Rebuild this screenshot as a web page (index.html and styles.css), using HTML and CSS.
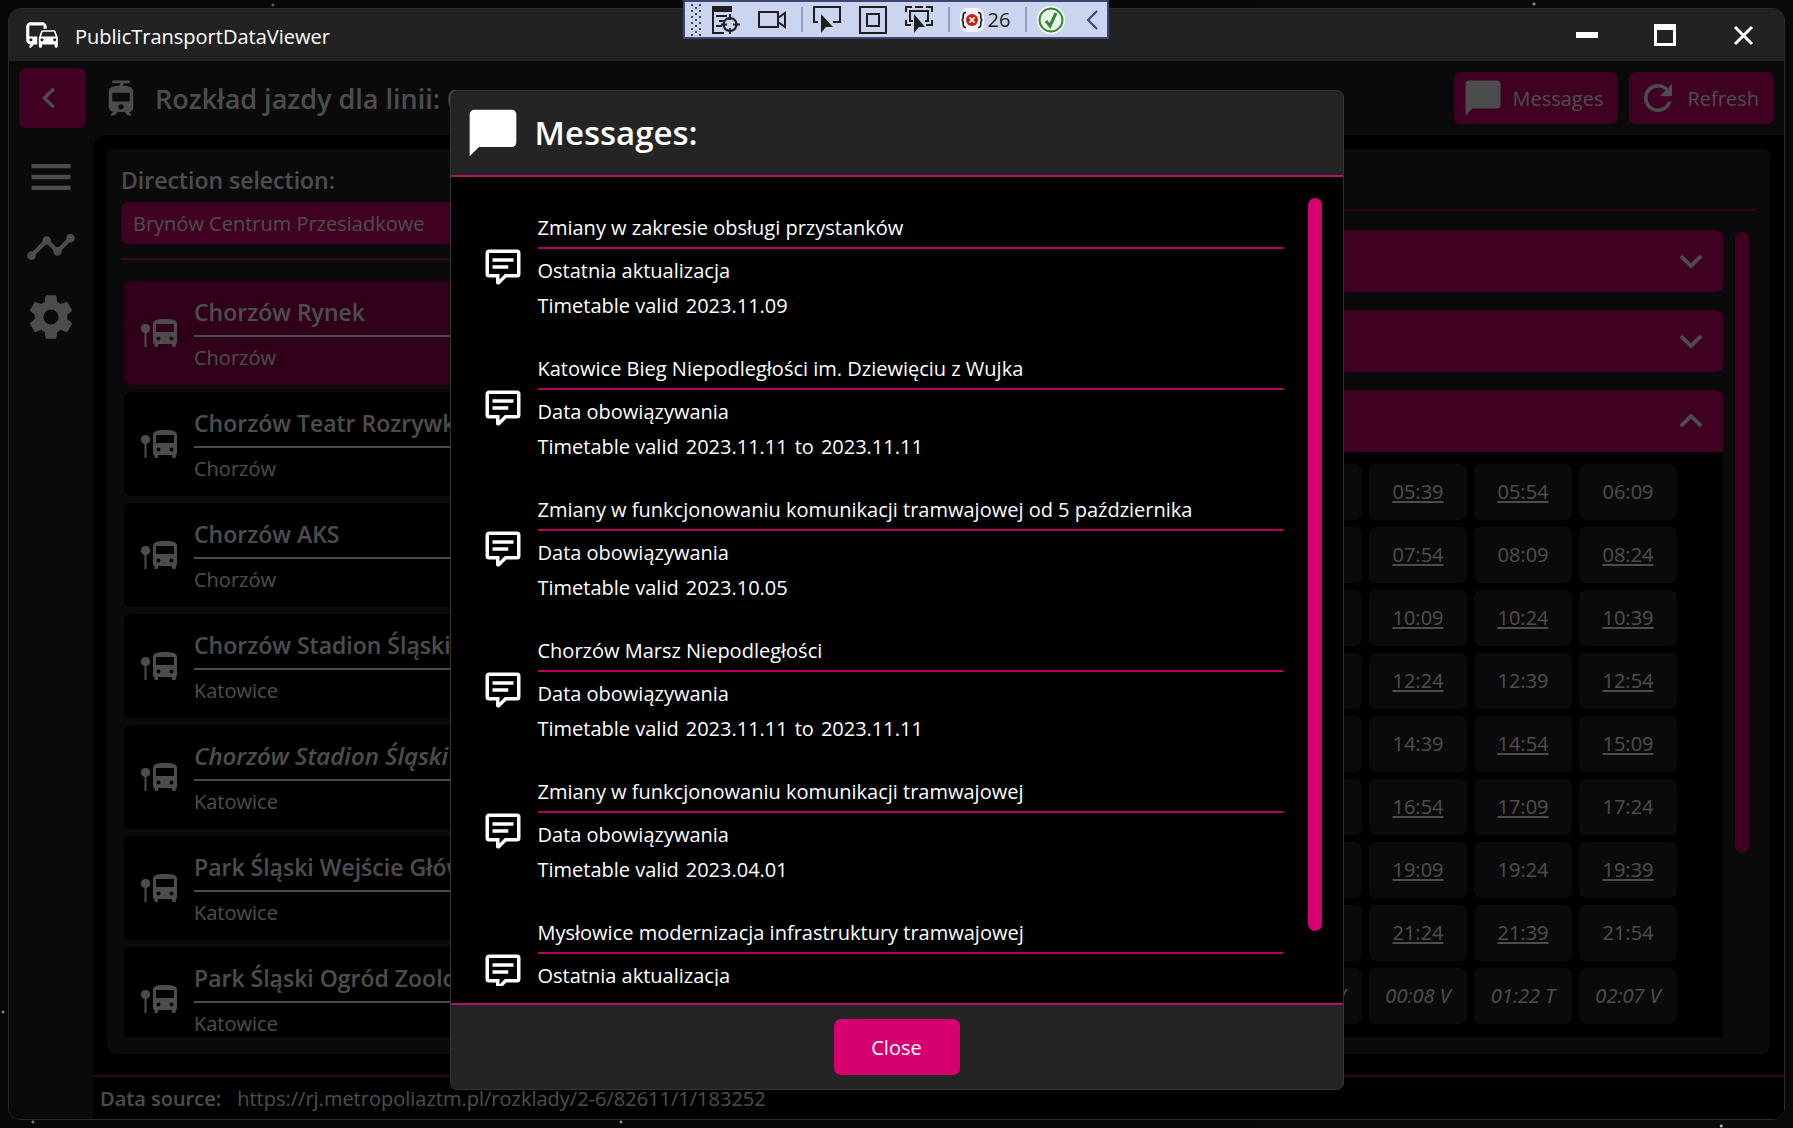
FILE: index.html
```html
<!DOCTYPE html>
<html lang="pl">
<head>
<meta charset="utf-8">
<title>PublicTransportDataViewer</title>
<link rel="stylesheet" href="styles.css">
</head>
<body>
<svg class="defs" aria-hidden="true">
  <symbol id="i-message" viewBox="0 0 24 24"><path d="M20,2H4A2,2 0 0,0 2,4V22L6,18H20A2,2 0 0,0 22,16V4C22,2.89 21.1,2 20,2Z"/></symbol>
  <symbol id="i-comment" viewBox="0 0 24 24"><path d="M9,22A1,1 0 0,1 8,21V18H4A2,2 0 0,1 2,16V4C2,2.89 2.9,2 4,2H20A2,2 0 0,1 22,4V16A2,2 0 0,1 20,18H13.9L10.2,21.71C10,21.9 9.75,22 9.5,22V22H9M10,16V19.08L13.08,16H20V4H4V16H10M6,7H18V9H6V7M6,11H15V13H6V11Z"/></symbol>
  <symbol id="i-down" viewBox="0 0 24 24"><path d="M7.41,8.58L12,13.17L16.59,8.58L18,10L12,16L6,10L7.41,8.58Z"/></symbol>
  <symbol id="i-up" viewBox="0 0 24 24"><path d="M7.41,15.41L12,10.83L16.59,15.41L18,14L12,8L6,14L7.41,15.41Z"/></symbol>
  <symbol id="i-stop" viewBox="0 0 36 28"><path fill-rule="evenodd" d="M4.500 5a4.500 4.500 0 0 1 1 8.900V28h-2V13.900A4.500 4.500 0 0 1 4.500 5zM12 5c0-4 4-5 12-5s12 1 12 5v18c0 1-.5 1.800-1.200 2.300V27a1 1 0 0 1-1 1H32a1 1 0 0 1-1-1v-2H17v2a1 1 0 0 1-1 1h-1.500a1 1 0 0 1-1-1v-1.700C12.500 24.800 12 24 12 23zM15 5v8h18V5zM17.500 17.500a2 2 0 1 0 0 4 2 2 0 0 0 0-4zM30.500 17.500a2 2 0 1 0 0 4 2 2 0 0 0 0-4z"/></symbol>
</svg>

<div class="window">
  <header class="titlebar">
    <svg class="app-icon" viewBox="0 0 24 24" aria-hidden="true"><path d="M12 4H5C3.34 4 2 5.34 2 7v8c0 1.660 1.340 3 3 3l-1 1v1h1l2-2.030L9 18v-5H4V5.980L13 6v2h2V7c0-1.660-1.340-3-3-3zM5 14c.55 0 1 .45 1 1s-.45 1-1 1-1-.45-1-1 .45-1 1-1zm15.570-4.340c-.14-.4-.52-.66-.97-.66h-7.190c-.46 0-.83.26-.98.66L10 13.770l.01 5.510c0 .38.31.72.69.72h.62c.38 0 .68-.38.68-.76V18h8v1.240c0 .38.31.76.69.76h.61c.38 0 .69-.34.69-.72l.01-1.370v-4.140l-1.430-4.110zm-8.160.34h7.190l1.030 3h-9.250l1.030-3zM12 16c-.55 0-1-.45-1-1s.45-1 1-1 1 .45 1 1-.45 1-1 1zm8 0c-.55 0-1-.45-1-1s.45-1 1-1 1 .45 1 1-.45 1-1 1z"/></svg>
    <span class="app-name">PublicTransportDataViewer</span>
    <div class="window-controls">
      <button aria-label="Minimize"><svg viewBox="0 0 22 22"><path d="M0 8h22v6H0z"/></svg></button>
      <button aria-label="Maximize"><svg viewBox="0 0 22 22"><path fill-rule="evenodd" d="M0 0h22v22H0zM3 6v13h16V6z"/></svg></button>
      <button aria-label="Close window"><svg viewBox="0 0 22 22"><path d="M3 3l17 17M20 3L3 20" fill="none" stroke="#fff" stroke-width="3"/></svg></button>
    </div>
  </header>

  <div class="body">
    <div class="topbar">
      <button class="back" aria-label="Back"><svg class="i42" viewBox="0 0 24 24"><path d="M15.410,16.580L10.830,12L15.410,7.410L14,6L8,12L14,18L15.410,16.580Z"/></svg></button>
      <svg class="i42 tram" viewBox="0 0 24 24" aria-hidden="true"><path d="M19,16.940V8.500C19,5.710 16.390,5.100 13,5L13.750,3.500H17V2H7V3.500H11.750L11,5C7.860,5.110 5,5.730 5,8.500V16.940C5,18.390 6.190,19.600 7.590,19.910L6,21.500V22H8.230L10.230,20H14L16,22H18V21.500L16.500,20H16.420C18.110,20 19,18.630 19,16.940M12,18.500A1.500,1.500 0 0,1 10.500,17A1.500,1.500 0 0,1 12,15.500A1.500,1.500 0 0,1 13.500,17A1.500,1.500 0 0,1 12,18.500M17,14H7V9H17V14Z"/></svg>
      <h1>Rozkład jazdy dla linii: 0</h1>
      <button class="action"><svg class="i42"><use href="#i-message"/></svg><span>Messages</span></button>
      <button class="action"><svg class="i42" viewBox="0 0 24 24"><path d="M17.650,6.350C16.200,4.900 14.210,4 12,4A8,8 0 0,0 4,12A8,8 0 0,0 12,20C15.730,20 18.840,17.450 19.730,14H17.650C16.830,16.330 14.610,18 12,18A6,6 0 0,1 6,12A6,6 0 0,1 12,6C13.660,6 15.140,6.690 16.220,7.780L13,11H20V4L17.650,6.350Z"/></svg><span>Refresh</span></button>
    </div>

    <div class="main">
      <nav class="sidebar">
        <button aria-label="Menu"><svg viewBox="0 0 24 24"><path d="M3,6H21V8H3V6M3,11H21V13H3V11M3,16H21V18H3V16Z"/></svg></button>
        <button aria-label="Lines"><svg viewBox="0 0 24 24"><path d="M23 8c0 1.100-.9 2-2 2-.18 0-.35-.02-.51-.07l-3.560 3.550c.05.16.07.34.07.52 0 1.100-.9 2-2 2s-2-.9-2-2c0-.18.02-.36.07-.52l-2.550-2.550c-.16.05-.34.07-.52.07s-.36-.02-.52-.07l-4.550 4.560c.05.16.07.33.07.51 0 1.100-.9 2-2 2s-2-.9-2-2 .9-2 2-2c.18 0 .35.02.51.07l4.560-4.550C8.020 9.360 8 9.180 8 9c0-1.100.9-2 2-2s2 .9 2 2c0 .18-.02.36-.07.52l2.550 2.550c.16-.05.34-.07.52-.07s.36.02.52.07l3.550-3.560C19.020 8.350 19 8.180 19 8c0-1.100.9-2 2-2s2 .9 2 2z"/></svg></button>
        <button aria-label="Settings"><svg viewBox="0 0 24 24"><path d="M12,15.500A3.500,3.500 0 0,1 8.500,12A3.500,3.500 0 0,1 12,8.500A3.500,3.500 0 0,1 15.500,12A3.500,3.500 0 0,1 12,15.500M19.430,12.970C19.470,12.650 19.500,12.330 19.500,12C19.500,11.670 19.470,11.340 19.430,11L21.540,9.370C21.730,9.220 21.780,8.950 21.660,8.730L19.660,5.270C19.540,5.050 19.270,4.960 19.050,5.050L16.560,6.050C16.040,5.660 15.500,5.320 14.870,5.070L14.500,2.420C14.460,2.180 14.250,2 14,2H10C9.750,2 9.540,2.180 9.500,2.420L9.130,5.070C8.500,5.320 7.960,5.660 7.440,6.050L4.950,5.050C4.730,4.960 4.460,5.050 4.340,5.270L2.340,8.730C2.210,8.950 2.270,9.220 2.460,9.370L4.570,11C4.530,11.340 4.500,11.670 4.500,12C4.500,12.330 4.530,12.650 4.570,12.970L2.460,14.630C2.270,14.780 2.210,15.050 2.340,15.270L4.340,18.730C4.460,18.950 4.730,19.030 4.950,18.950L7.440,17.940C7.960,18.340 8.500,18.680 9.130,18.930L9.500,21.580C9.540,21.820 9.750,22 10,22H14C14.250,22 14.460,21.820 14.500,21.580L14.870,18.930C15.500,18.670 16.040,18.340 16.560,17.940L19.050,18.950C19.270,19.030 19.540,18.950 19.660,18.730L21.660,15.270C21.780,15.050 21.730,14.780 21.540,14.630L19.430,12.970Z"/></svg></button>
      </nav>

      <div class="content">
        <div class="panels">
          <section class="panel directions">
            <label for="direction">Direction selection:</label>
            <select id="direction"><option>Brynów Centrum Przesiadkowe</option></select>
            <hr>
            <ul class="stops">
              <li class="selected"><svg><use href="#i-stop"/></svg><div><h2>Chorzów Rynek</h2><p>Chorzów</p></div></li>
              <li><svg><use href="#i-stop"/></svg><div><h2>Chorzów Teatr Rozrywki</h2><p>Chorzów</p></div></li>
              <li><svg><use href="#i-stop"/></svg><div><h2>Chorzów AKS</h2><p>Chorzów</p></div></li>
              <li><svg><use href="#i-stop"/></svg><div><h2>Chorzów Stadion Śląski</h2><p>Katowice</p></div></li>
              <li><svg><use href="#i-stop"/></svg><div><h2 class="on-request">Chorzów Stadion Śląski</h2><p>Katowice</p></div></li>
              <li><svg><use href="#i-stop"/></svg><div><h2>Park Śląski Wejście Główne</h2><p>Katowice</p></div></li>
              <li><svg><use href="#i-stop"/></svg><div><h2>Park Śląski Ogród Zoologiczny</h2><p>Katowice</p></div></li>
            </ul>
          </section>

          <section class="panel timetable">
            <div class="timetable-head"></div>
            <div class="scroll">
              <div class="days">
                <button class="day" aria-label="Expand"><svg><use href="#i-down"/></svg></button>
                <button class="day" aria-label="Expand"><svg><use href="#i-down"/></svg></button>
                <div class="day-open">
                  <button class="day" aria-label="Collapse"><svg><use href="#i-up"/></svg></button>
                  <div class="times">
                    <span>05:24</span><u>05:39</u><u>05:54</u><span>06:09</span>
                    <span>07:39</span><u>07:54</u><span>08:09</span><u>08:24</u>
                    <span>09:54</span><u>10:09</u><u>10:24</u><u>10:39</u>
                    <span>12:09</span><u>12:24</u><span>12:39</span><u>12:54</u>
                    <span>14:24</span><span>14:39</span><u>14:54</u><u>15:09</u>
                    <span>16:39</span><u>16:54</u><u>17:09</u><span>17:24</span>
                    <span>18:54</span><u>19:09</u><span>19:24</span><u>19:39</u>
                    <span>21:09</span><u>21:24</u><u>21:39</u><span>21:54</span>
                    <i>23:38 V</i><i>00:08 V</i><i>01:22 T</i><i>02:07 V</i>
                  </div>
                </div>
              </div>
              <div class="thumb"></div>
            </div>
          </section>
        </div>
        <footer class="source"><b>Data source:</b><span>https://rj.metropoliaztm.pl/rozklady/2-6/82611/1/183252</span></footer>
      </div>
    </div>

    <div class="overlay">
      <div class="dialog" role="dialog" aria-labelledby="dialog-title">
        <header><svg><use href="#i-message"/></svg><h2 id="dialog-title">Messages:</h2></header>
        <div class="dialog-body">
          <ul class="messages">
            <li><svg class="i42"><use href="#i-comment"/></svg><div><h3>Zmiany w zakresie obsługi przystanków</h3><p>Ostatnia aktualizacja</p><p class="valid"><span>Timetable valid</span><span>2023.11.09</span></p></div></li>
            <li><svg class="i42"><use href="#i-comment"/></svg><div><h3>Katowice Bieg Niepodległości im. Dziewięciu z Wujka</h3><p>Data obowiązywania</p><p class="valid"><span>Timetable valid</span><span>2023.11.11</span><span>to</span><span>2023.11.11</span></p></div></li>
            <li><svg class="i42"><use href="#i-comment"/></svg><div><h3>Zmiany w funkcjonowaniu komunikacji tramwajowej od 5 października</h3><p>Data obowiązywania</p><p class="valid"><span>Timetable valid</span><span>2023.10.05</span></p></div></li>
            <li><svg class="i42"><use href="#i-comment"/></svg><div><h3>Chorzów Marsz Niepodległości</h3><p>Data obowiązywania</p><p class="valid"><span>Timetable valid</span><span>2023.11.11</span><span>to</span><span>2023.11.11</span></p></div></li>
            <li><svg class="i42"><use href="#i-comment"/></svg><div><h3>Zmiany w funkcjonowaniu komunikacji tramwajowej</h3><p>Data obowiązywania</p><p class="valid"><span>Timetable valid</span><span>2023.04.01</span></p></div></li>
            <li><svg class="i42"><use href="#i-comment"/></svg><div><h3>Mysłowice modernizacja infrastruktury tramwajowej</h3><p>Ostatnia aktualizacja</p></div></li>
          </ul>
          <div class="thumb"></div>
        </div>
        <footer><button class="close">Close</button></footer>
      </div>
    </div>
  </div>
</div>

<div class="debugbar">
  <svg class="grip" viewBox="0 0 10 32"><path d="M1 0v32M9 0v32" stroke="#3c4670" stroke-width="2" stroke-dasharray="2 4"/><path d="M5 3v28" stroke="#3c4670" stroke-width="2" stroke-dasharray="2 4"/></svg>
  <button aria-label="Live visual tree"><svg viewBox="0 0 28 28"><path d="M0 0h19v5H0z" fill="#1e1e1e"/><path d="M1 3v24h11M4 10h11M7 15h5M4 20h6M18 12a6.500 6.500 0 1 0 .1 0zM18 8v6M18 22v6M9 18.500h6M21 18.500h7"/></svg></button>
  <button aria-label="Record"><svg viewBox="0 0 28 28"><path d="M1 6h19v15H1zM20 12l7-5v14l-7-5"/></svg></button>
  <span class="sep"></span>
  <button aria-label="Select element"><svg viewBox="0 0 28 28"><path d="M5 16H1V1h26v15h-7"/><path d="M8 8v19l5-6h7z" fill="#1e1e1e" stroke="none"/></svg></button>
  <button aria-label="Layout adorners"><svg viewBox="0 0 28 28"><path d="M1 1h26v26H1zM8 8h12v12H8z"/></svg></button>
  <button aria-label="Track focused element"><svg viewBox="0 0 28 28"><path d="M1 6V1h6M21 1h6v5M1 14v5h5M27 14v5h-6M8 15H5V5h18v10h-3M10 1h8"/><path d="M9 8v19l5-6h6z" fill="#1e1e1e" stroke="none"/></svg></button>
  <span class="sep"></span>
  <button class="errors"><svg viewBox="0 0 28 28"><rect width="28" height="28" rx="8" fill="#fff" stroke="none" opacity=".7"/><path d="M7 5c-6 0-1 8-5 9 4 1-1 9 5 9M21 5c6 0 1 8 5 9-4 1 1 9-5 9"/><circle cx="14" cy="14" r="7" fill="#d11a0c" stroke="none"/><path d="M11 11l6 6M17 11l-6 6" stroke="#fff"/></svg>26</button>
  <span class="sep"></span>
  <button aria-label="Hot reload"><svg viewBox="0 0 28 28"><circle cx="14" cy="14" r="14" fill="#fff" stroke="none"/><circle cx="14" cy="14" r="11.500" stroke="#2f8a2f" fill="#eef3ee"/><path d="M9 15l4 5 6-13" stroke="#2f8a2f" stroke-width="3"/></svg></button>
  <button class="collapse" aria-label="Collapse toolbar"><svg viewBox="0 0 20 28"><path d="M14 5l-9 9 9 9" stroke="#3c4670"/></svg></button>
</div>
</body>
</html>
```
FILE: styles.css
```css
:root {
  --accent: #d6006f;
  --surface: #242424;
}

* {
  box-sizing: border-box;
}

body {
  margin: 0;
  padding: 8px;
  height: 100vh;
  overflow: hidden;
  color: #fff;
  font: 20px/28px "Open Sans", "Noto Sans", sans-serif;
  background:
    radial-gradient(circle at 99% 10%, #888 0 1px, transparent 2px),
    radial-gradient(circle at 3px 1012px, #777 0 1px, transparent 2px),
    radial-gradient(circle at 33px 1122px, #777 0 1px, transparent 2px),
    radial-gradient(circle at 621px 1122px, #888 0 1px, transparent 2px),
    radial-gradient(circle at 96% 1126px, #aaa 0 1px, transparent 2px),
    radial-gradient(circle at 1534px 4px, #888 0 1px, transparent 2px),
    radial-gradient(circle at 273px 5px, #555 0 1px, transparent 2px),
    linear-gradient(90deg, #060708, #0b0908);
}

h1, h2, h3, p, ul {
  margin: 0;
  padding: 0;
  list-style: none;
}

button, select {
  border: 0;
  padding: 0;
  color: inherit;
  font: inherit;
  background: none;
}

svg {
  display: block;
  flex: none;
  fill: #fff;
}

.defs {
  position: absolute;
  width: 0;
  height: 0;
}

.i42 {
  width: 42px;
  height: 42px;
}

.window {
  display: flex;
  flex-direction: column;
  height: 100%;
  border: 1px solid #2a2a2a;
  border-radius: 12px;
  overflow: hidden;
  background: #000;
}

.titlebar {
  display: flex;
  align-items: center;
  height: 52px;
  padding: 0 20px 0 14px;
  flex: none;
  background: #222;
}

.app-icon {
  width: 38px;
  height: 38px;
}

.app-name {
  margin-left: 14px;
  padding-top: 3px;
}

.window-controls {
  display: flex;
  margin-left: auto;
  gap: 36px;
}

.window-controls button {
  padding: 0 10px;
}

.window-controls svg {
  width: 22px;
  height: 22px;
}

.body {
  position: relative;
  display: flex;
  flex: 1;
  flex-direction: column;
  min-height: 0;
  background: var(--surface);
}

.topbar {
  display: flex;
  align-items: center;
  height: 74px;
  padding: 0 10px;
  flex: none;
}

.back {
  display: grid;
  place-items: center;
  width: 67px;
  height: 60px;
  padding-right: 7px;
  border-radius: 7px;
  background: var(--accent);
}

.tram {
  margin: 0 13px 0 14px;
}

h1 {
  flex: 1;
  padding-top: 2px;
  font-size: 27px;
  font-weight: 600;
}

.action {
  display: flex;
  align-items: center;
  gap: 8px;
  height: 52px;
  margin-left: 11px;
  padding: 0 15px 0 8px;
  border-radius: 7px;
  background: var(--accent);
}

.action span {
  padding-top: 2px;
}

.main {
  display: flex;
  flex: 1;
  min-height: 0;
}

.sidebar {
  display: flex;
  flex-direction: column;
  align-items: center;
  gap: 18px;
  width: 84px;
  padding-top: 16px;
}

.sidebar svg {
  width: 52px;
  height: 52px;
}

.content {
  display: flex;
  flex: 1;
  flex-direction: column;
  min-width: 0;
  border-top-left-radius: 14px;
  background: #000;
}

.panels {
  display: grid;
  flex: 1;
  grid-template-columns: 3fr 5fr;
  gap: 14px;
  min-height: 0;
  padding: 14px 14px 21px;
}

.panel {
  display: flex;
  flex-direction: column;
  min-width: 0;
  min-height: 0;
  border-radius: 8px;
  background: var(--surface);
}

.directions {
  padding: 13px 14px 17px;
}

.directions label {
  margin-bottom: 4px;
  font-size: 23px;
  font-weight: 600;
  line-height: 36px;
}

.directions select {
  height: 42px;
  padding: 2px 12px 0;
  border-radius: 7px;
  appearance: none;
  background: var(--accent);
}

.directions hr {
  width: 100%;
  margin: 14px 0 21px;
  border: 0;
  border-top: 2px solid var(--accent);
}

.stops {
  display: flex;
  flex: 1;
  flex-direction: column;
  gap: 7px;
  min-height: 0;
  padding-left: 3px;
  overflow: hidden;
}

.stops li {
  display: flex;
  flex: none;
  align-items: center;
  gap: 17px;
  height: 104px;
  padding: 0 14px 0 17px;
  border-radius: 7px;
  background: #000;
}

.stops .selected {
  background: #a00053;
}

.stops svg {
  width: 36px;
  height: 28px;
}

.stops div {
  flex: 1;
}

.stops h2 {
  padding-bottom: 2px;
  border-bottom: 2px solid #fff;
  font-size: 23px;
  font-weight: 600;
  line-height: 42px;
}

.stops .on-request {
  font-size: 24px;
  font-style: italic;
}

.stops p {
  padding-top: 4px;
  line-height: 34px;
}

.timetable {
  padding: 0 14px 17px;
}

.timetable-head {
  height: 62px;
  margin-bottom: 19px;
  flex: none;
  border-bottom: 2px solid #a8105c;
}

.scroll {
  display: flex;
  flex: 1;
  align-items: flex-start;
  gap: 12px;
  min-height: 0;
  padding-right: 7px;
}

.days {
  display: flex;
  flex: 1;
  flex-direction: column;
  gap: 18px;
  height: 100%;
  overflow: hidden;
}

.day {
  display: flex;
  flex: none;
  align-items: center;
  justify-content: flex-end;
  width: 100%;
  height: 62px;
  padding-right: 9px;
  border-radius: 7px;
  background: var(--accent);
}

.day svg {
  width: 46px;
  height: 46px;
}

.day-open {
  flex: 1;
  background: linear-gradient(var(--surface) 0 20px, #000 20px);
}

.day-open .day {
  border-radius: 7px 7px 0 0;
}

.times {
  display: grid;
  grid-template-columns: repeat(4, 98px);
  grid-auto-rows: 56px;
  gap: 7px;
  justify-content: end;
  padding: 12px 46px 0 0;
}

.times > * {
  display: grid;
  place-items: center;
  border-radius: 7px;
  background: var(--surface);
  text-underline-offset: 2px;
}

.thumb {
  width: 14px;
  border-radius: 7px;
  background: var(--accent);
}

.scroll .thumb {
  height: 77%;
  margin-top: 2px;
}

.source {
  display: flex;
  gap: 16px;
  height: 44px;
  padding: 8px 7px 0;
  flex: none;
  border-top: 2px solid #a8105c;
}

.source b {
  font-weight: 600;
}

.overlay {
  position: absolute;
  inset: 0;
  display: flex;
  justify-content: center;
  padding: 29px;
  background: rgba(0, 0, 0, .7);
}

.dialog {
  display: flex;
  flex-direction: column;
  width: 100%;
  max-width: 894px;
  border: 1px solid #333;
  border-radius: 7px;
  overflow: hidden;
  background: var(--surface);
}

.dialog header {
  display: flex;
  align-items: center;
  gap: 14px;
  height: 86px;
  padding: 0 14px;
  flex: none;
  border-bottom: 2px solid #b01466;
}

.dialog header svg {
  width: 56px;
  height: 56px;
}

.dialog header h2 {
  font-size: 33px;
  font-weight: 600;
}

.dialog-body {
  display: flex;
  flex: 1;
  align-items: flex-start;
  gap: 25px;
  min-height: 0;
  padding: 21px 21px 17px 31px;
  background: #000;
}

.dialog-body .thumb {
  height: 93%;
}

.messages {
  flex: 1;
  height: 100%;
  overflow: hidden;
}

.messages li {
  display: flex;
  align-items: center;
  gap: 14px;
  height: 141px;
  padding: 11px 0 16px;
}

.messages li:first-child {
  height: 142px;
  padding-top: 12px;
}

.messages div {
  flex: 1;
  height: 114px;
}

.messages h3 {
  margin-bottom: 4px;
  padding-bottom: 2px;
  border-bottom: 2px solid #b8005f;
  font-size: 20px;
  font-weight: 400;
  line-height: 35px;
}

.messages p {
  line-height: 35px;
}

.valid {
  display: flex;
  gap: 7px;
}

.dialog footer {
  display: grid;
  place-items: center;
  height: 86px;
  flex: none;
  border-top: 2px solid #b01466;
}

.close {
  width: 126px;
  height: 56px;
  padding-top: 1px;
  border-radius: 7px;
  background: var(--accent);
}

.debugbar {
  position: absolute;
  top: 0;
  left: 50%;
  display: flex;
  align-items: center;
  width: 426px;
  height: 39px;
  margin-left: -214px;
  padding-left: 6px;
  border: 2px solid #3c4670;
  background: #ccd5f0;
  color: #1e1e1e;
}

.debugbar svg {
  width: 28px;
  height: 28px;
  fill: none;
  stroke: #1e1e1e;
  stroke-width: 2;
}

.debugbar .grip {
  width: 10px;
  height: 32px;
  margin-right: 2px;
}

.debugbar button {
  margin: 0 9px;
}

.debugbar .errors {
  display: flex;
  align-items: center;
  gap: 4px;
}

.debugbar .errors svg {
  width: 24px;
  height: 24px;
}

.debugbar .collapse {
  margin-right: 0;
}

.debugbar .collapse svg {
  width: 20px;
}

.sep {
  flex: none;
  width: 2px;
  height: 25px;
  margin: 0 1px 0 6px;
  background: #8f9fc8;
}
```
